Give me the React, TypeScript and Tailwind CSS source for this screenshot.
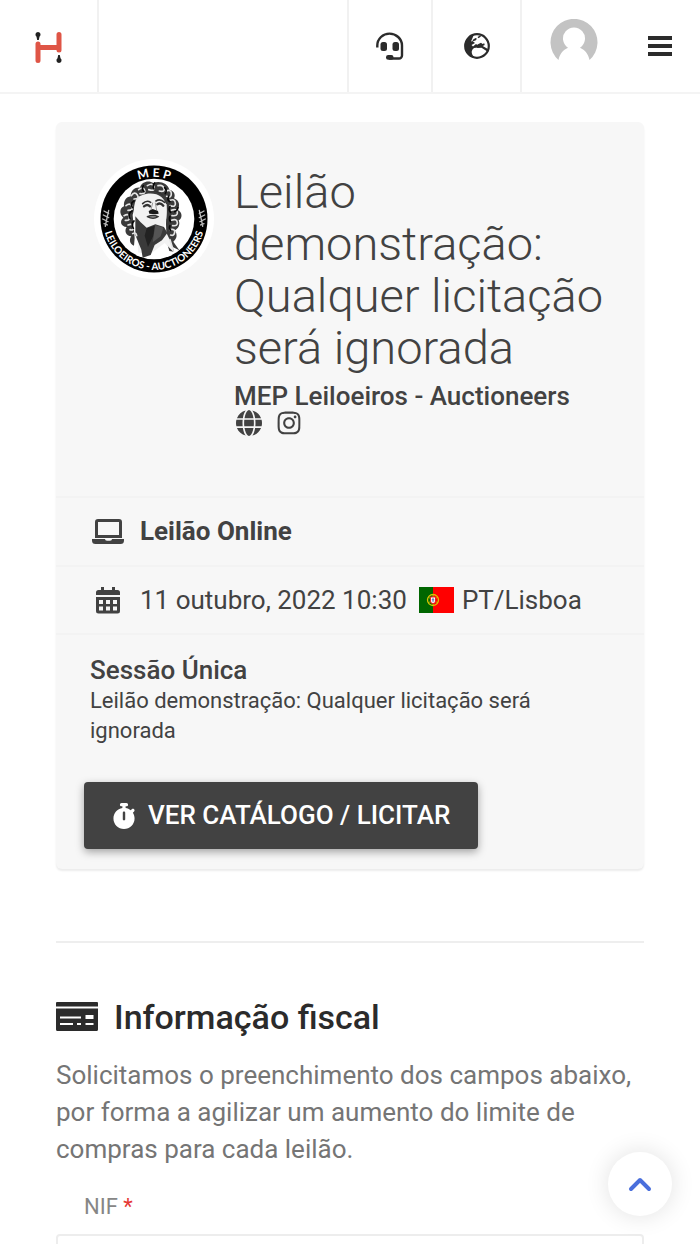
import { FaGlobe, FaInstagram, FaStopwatch } from "react-icons/fa6";

function BrandMark() {
  return (
    <svg viewBox="0 0 30 34" className="h-[34px] w-[30px]" aria-hidden="true">
      <g stroke="#df5546" strokeWidth="5" strokeLinecap="round" fill="none">
        <path d="M4 13V29.500M25 3.500V19M4 16.500H25" />
      </g>
      <g fill="#222">
        <path d="M4 1a2.600 2.600 0 0 1 1.500 4.700L4.800 9H3.200L2.500 5.700A2.600 2.600 0 0 1 4 1Z" />
        <path d="M25 32a2.600 2.600 0 0 1-1.500-4.700L24.200 24h1.600l.7 3.300A2.600 2.600 0 0 1 25 32Z" />
      </g>
    </svg>
  );
}

function HeadsetIcon() {
  return (
    <svg viewBox="0 0 28 28" className="size-7" aria-hidden="true">
      <path
        d="M1.300 15.500V13.500C1.300 6.700 7 1.600 13.500 1.600S26 6.700 26 13.500V23.500a3 3 0 0 1-3 3H13"
        fill="none"
        stroke="#2b2b2b"
        strokeWidth="2.400"
      />
      <rect x="4.500" y="10" width="6.500" height="9" rx="2.500" fill="#2b2b2b" />
      <rect x="16.500" y="10" width="6.500" height="9" rx="2.500" fill="#2b2b2b" />
      <rect x="10" y="23" width="7.500" height="4.700" rx="2.200" fill="#2b2b2b" />
    </svg>
  );
}

function EarthIcon() {
  return (
    <svg viewBox="0 0 26 26" className="size-[26px]" aria-hidden="true">
      <circle cx="13" cy="13" r="11.800" fill="#fff" stroke="#2b2b2b" strokeWidth="2.200" />
      <g fill="#2b2b2b">
        <path d="M10 1.500C4.500 3 1 8 1.200 13.500 1.500 19.500 5 23.500 10 25l-1.500-3C7 19.500 7.500 16.500 10 15l4-.5 1-1.500-3-2-3 2.500L7.500 12l3.500-2L8.500 8 7 8.500 8.500 5Z" />
        <path d="M13.500 11.500l3.500-1.700 1.500 1.200 1.700-.8.5 1.800-2 1 6 3.500-.6 2.500-6.600-4.200-4 .2-1-1.500Z" />
        <path d="m8.500 7 3-2 1.500.8-1.500 1.700-2.500.8ZM13.500 4l2.500-1.500 1 1-2.500 1.700Z" />
      </g>
    </svg>
  );
}

function Avatar() {
  return (
    <svg viewBox="0 0 48 42" className="h-[42px] w-12" role="img" aria-label="Conta">
      <path
        d="M8.500 41A23.500 23.500 0 1 1 39.500 41C38.500 35 35 31 30 28.700A11 11 0 1 0 18 28.700C13 31 9.500 35 8.500 41Z"
        fill="#c3c3c3"
      />
    </svg>
  );
}

function MepLogo() {
  return (
    <svg viewBox="0 0 122 122" className="size-[122px] shrink-0" role="img" aria-label="MEP Leiloeiros">
      <defs>
        <path id="mepTop" d="M20 61A42 42 0 0 1 104 61" />
        <path id="mepBottom" d="M11 61A51 51 0 0 0 113 61" />
      </defs>
      <circle cx="62" cy="61" r="60" fill="#fff" />
      <circle cx="62" cy="61" r="53.500" fill="#000" />
      <circle cx="62" cy="61" r="40.300" fill="#fff" />
      <g fill="#fff" fontFamily="Lato, sans-serif" fontWeight="700" textAnchor="middle">
        <text fontSize="12">
          <textPath href="#mepTop" startOffset="50%">M E P</textPath>
        </text>
        <text fontSize="10">
          <textPath href="#mepBottom" startOffset="50%">LEILOEIROS - AUCTIONEERS</textPath>
        </text>
      </g>
      <g transform="translate(-2 -3) scale(.3333)">
        {/* laurels at both sides */}
        <g stroke="#bbb" strokeWidth="4" fill="none" strokeLinecap="round">
          <path d="M42 168l14 8M40 180l16 8M38 192l16 8M42 206l10 4M56 166l-10 46M52 184l-6 30" />
          <path d="M342 168l-14 8M344 180l-16 8M346 192l-16 8M342 206l-10 4M328 166l10 46M332 184l6 30" />
        </g>
        {/* hair */}
        <path
          d="M122 124c0-18 14-28 28-26 4-18 26-24 40-14 20-8 44 2 48 20 14 2 20 16 14 26 16 6 20 22 10 34 16 6 16 26 4 32 6 14-2 26-12 30 10 14 6 26-4 34l18 26-20-10 4 14-14-2-8-28-2-52 2-60-40-24-50 10-12 46 6 70-2 22c-12-4-16-18-8-28-16-2-22-16-14-28-18-2-22-18-10-28-14-12-10-30 2-34-2-16 6-28 20-30Z"
          fill="#3b3b3b"
        />
        {/* face and neck */}
        <path
          d="M138 134c12-20 56-26 76-8 18 14 18 40 15 64l-7 28 18 38 14 38-30-30-46 36-34-8-2-78c-12-24-14-58-4-80Z"
          fill="#f2f2f2"
        />
        <path d="M136 184l16 18 18 16 26-10 26 8 10 18-16 22-22 14-12 30-24 8-4-24-18-44Z" fill="#3a3a3a" />
        <path d="M170 220l24-8-4 30-16 34-10-34Z" fill="#222" />
        <path d="M196 210l24 8-8 26-24 18Z" fill="#555" />
        {/* brows, eyes, nose, mouth */}
        <g fill="none" stroke="#333" strokeLinecap="round">
          <path d="M158 146q12-12 24-4M198 138q12-8 26 4" strokeWidth="5" />
          <path d="M162 154q10-8 18 0M202 148q10-6 18 4" strokeWidth="7" />
          <path d="M188 144l-6 24M196 144l4 22" strokeWidth="3" stroke="#999" />
          <path d="M172 185q18-8 32 0q-14 10-32 0" strokeWidth="4" fill="#888" />
          <path d="M150 110q30-16 68 10" strokeWidth="4" />
        </g>
        <path d="M176 168l12-6 16 6 2 8-10 2-18-2Z" fill="#1b1b1b" />
        {/* curls */}
        <g fill="none" stroke="#e4e4e4" strokeWidth="5" strokeLinecap="round">
          <path d="M124 122q10-14 18-2t-10 12M146 104q14-10 18 2t-14 10M172 92q16-10 20 4t-16 8M204 92q14-4 18 8t-14 8M228 108q16-6 16 8t-14 8" />
          <path d="M108 152q12-10 18 2t-12 12M102 182q14-8 16 4t-12 10M114 210q14-6 16 6t-10 8M128 236q10-6 12 6" />
          <path d="M240 136q14-6 16 8t-16 8M244 166q16-6 18 6t-16 10M244 196q16-6 18 6t-14 10M240 224q16-4 14 8t-12 8M240 254l8 26" />
        </g>
        <g fill="none" stroke="#080808" strokeWidth="5" strokeLinecap="round">
          <path d="M132 138q-14 8-4 20M126 168q-14 8-6 22M132 198q-10 8-2 22M160 92q-6 10 2 18M194 84q-8 8-2 18M224 98q8 8 2 18" />
          <path d="M236 124q-6 10 4 16M240 154q-6 10 2 18M264 158q-2 10-10 12M240 184q-4 10 2 16M240 212q-4 8 2 14" />
        </g>
      </g>
    </svg>
  );
}

function LaptopIcon() {
  return (
    <svg viewBox="0 0 32 28" className="h-7 w-8 shrink-0" fill="currentColor" aria-hidden="true">
      <path
        fillRule="evenodd"
        d="M6 1h21q3 0 3 3v16H3V4q0-3 3-3ZM6 4v13h21V4Z"
      />
      <path d="M0 21h13q0 1.700 2 1.700h3q2 0 2-1.700h12v1.500Q32 26 28.500 26H3.500Q0 26 0 22.500Z" />
    </svg>
  );
}

function CalendarIcon() {
  return (
    <svg viewBox="0 0 24 27" className="h-[27px] w-6" aria-hidden="true">
      <g fill="currentColor">
        <path d="M5 0h3v4H5ZM16 0h3v4H16ZM2.500 3h19Q24 3 24 5.500V8H0V5.500Q0 3 2.500 3Z" />
        <path
          fillRule="evenodd"
          d="M0 10h24v14q0 2.500-2.500 2.500h-19Q0 26.500 0 24ZM3 13v4h4v-4ZM10 13v4h4v-4ZM17 13v4h4v-4ZM3 19.500v4h4v-4ZM10 19.500v4h4v-4ZM17 19.500v4h4v-4Z"
        />
      </g>
    </svg>
  );
}

function PortugalFlag() {
  return (
    <svg viewBox="0 0 35 26" className="h-[26px] w-[35px]" role="img" aria-label="Portugal">
      <path d="M0 0h14v26H0z" fill="#060" />
      <path d="M14 0h21v26H14z" fill="red" />
      <circle cx="14" cy="13" r="5.500" fill="none" stroke="#d9c500" strokeWidth="1.300" />
      <path d="M9 10l10 6M9 16l10-6M14 7v12" stroke="#d9c500" strokeWidth=".7" />
      <path d="M11 9.500h6V14a3 3 0 0 1-6 0Z" fill="#e22" />
      <path d="M12 10.500h4V14a2 2 0 0 1-4 0Z" fill="#fff" />
      <path d="M14 11v4M12.700 12.800h2.600" stroke="#3656a5" strokeWidth=".8" />
    </svg>
  );
}

function CardIcon() {
  return (
    <svg viewBox="0 0 42 30" className="h-[30px] w-[42px] shrink-0" aria-hidden="true">
      <path d="M0 1q0-1 1-1h40q1 0 1 1v3.500H0ZM0 6.500h42v21q0 1.500-1.500 1.500h-39Q0 29 0 27.500Z" fill="#2b2b2b" />
      <path d="M4 14.500h21v2H4ZM4 21h13v2H4ZM29.500 13h8v4h-8ZM29.500 21h8v2h-8ZM21 21h4v2h-4Z" fill="#fff" />
    </svg>
  );
}

function Header() {
  return (
    <header className="flex h-[94px] border-b-2 border-[#f4f4f4] bg-white">
      <a href="#" aria-label="Início" className="flex w-[99px] items-center justify-center border-r-2 border-[#f1f1f1] pt-1">
        <BrandMark />
      </a>
      <div className="flex-1"></div>
      <button aria-label="Suporte" className="flex w-[84px] items-center justify-center border-l-2 border-[#f1f1f1]">
        <HeadsetIcon />
      </button>
      <button aria-label="Idioma" className="flex w-[91px] items-center justify-center border-x-2 border-[#f1f1f1]">
        <EarthIcon />
      </button>
      <div className="flex w-[178px] items-center justify-between px-7">
        <button aria-label="Conta" className="pb-3">
          <Avatar />
        </button>
        <button aria-label="Menu" className="flex flex-col gap-1">
          <span className="h-1 w-6 bg-[#2b2b2b]"></span>
          <span className="h-1 w-6 bg-[#2b2b2b]"></span>
          <span className="h-1 w-6 bg-[#2b2b2b]"></span>
        </button>
      </div>
    </header>
  );
}

function AuctionCard() {
  return (
    <section className="rounded-md bg-[#f7f7f7] text-[#424242] shadow-[0_2px_2px_rgba(0,0,0,0.08)]">
      <div className="flex gap-5 px-9 pt-9 pb-[60px]">
        <MepLogo />
        <div className="pt-2">
          <h1 className="text-[47px] leading-[52px] font-light">
            Leilão demonstração: Qualquer licitação será ignorada
          </h1>
          <h2 className="pt-2 text-[26px] leading-7 font-medium">MEP Leiloeiros - Auctioneers</h2>
          <div className="flex gap-3.5 px-0.5 text-[26px]">
            <a href="#" aria-label="Website">
              <FaGlobe />
            </a>
            <a href="#" aria-label="Instagram">
              <FaInstagram />
            </a>
          </div>
        </div>
      </div>
      <div className="flex h-[69px] items-center gap-4 border-t-2 border-[#f3f3f3] px-9 text-[26px] font-bold">
        <LaptopIcon />
        <span>Leilão Online</span>
      </div>
      <div className="flex h-[70px] items-center border-y-2 border-[#f3f3f3] px-9 text-[26px]">
        <span className="mr-4 flex w-8 justify-center">
          <CalendarIcon />
        </span>
        <span className="mr-3">11 outubro, 2022 10:30</span>
        <PortugalFlag />
        <span className="ml-2">PT/Lisboa</span>
      </div>
      <div className="px-7 py-5">
        <div className="px-1.5">
          <h3 className="text-[26px] leading-[31px] font-medium">Sessão Única</h3>
          <p className="text-[22px] leading-[30px]">Leilão demonstração: Qualquer licitação será ignorada</p>
        </div>
        <button className="mt-9 flex h-[67px] items-center gap-3 rounded bg-[#424242] px-7 text-[26px] font-medium text-white shadow-[0_3px_8px_rgba(0,0,0,0.35)]">
          <FaStopwatch className="w-6" />
          VER CATÁLOGO / LICITAR
        </button>
      </div>
    </section>
  );
}

function FiscalForm() {
  return (
    <section>
      <h2 className="flex items-center gap-4 text-[34px] leading-10 font-medium text-[#2b2b2b]">
        <CardIcon />
        Informação fiscal
      </h2>
      <p className="mt-5 text-[26px] leading-[37px] text-[#757575]">
        Solicitamos o preenchimento dos campos abaixo, por forma a agilizar um aumento do limite de compras para cada
        leilão.
      </p>
      <label htmlFor="nif" className="mt-6 block px-7 text-[22px] leading-[30px] text-[#868686]">
        NIF <span className="text-[#e53935]">*</span>
      </label>
      <input id="nif" type="text" className="mt-3 block h-16 w-full rounded border-2 border-[#ededed] px-7 text-[26px]" />
    </section>
  );
}

function App() {
  return (
    <div className="min-h-screen bg-white font-['Roboto',sans-serif]">
      <Header />
      <main className="px-14 pt-7">
        <AuctionCard />
        <hr className="mt-[72px] mb-[54px] border-t-2 border-[#eee]" />
        <FiscalForm />
      </main>
      <button
        aria-label="Voltar ao topo"
        className="fixed right-7 bottom-7 flex size-16 items-center justify-center rounded-full bg-white shadow-[0_0_24px_rgba(0,0,0,0.12)]"
      >
        <svg viewBox="0 0 24 16" className="h-4 w-6" fill="none" aria-hidden="true">
          <path d="M3 13l9-9 9 9" stroke="#4a6fdc" strokeWidth="4" strokeLinecap="round" strokeLinejoin="round" />
        </svg>
      </button>
    </div>
  );
}

export default App;
